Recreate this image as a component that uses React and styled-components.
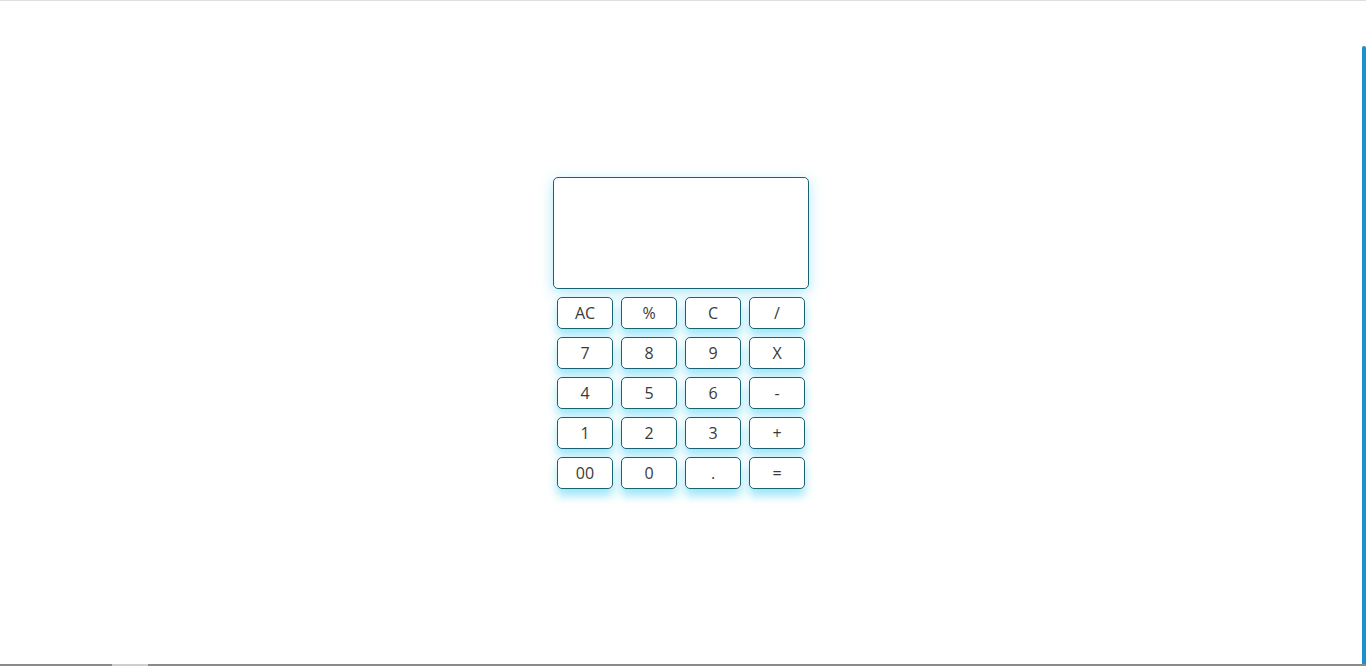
import React from "react";
import styled, { createGlobalStyle } from "styled-components";

const GlobalStyle = createGlobalStyle`
  html, body {
    margin: 0;
    padding: 0;
    background: #ffffff;
    font-family: "Open Sans", "Noto Sans", sans-serif;
  }
`;

const Page = styled.div`
  height: 666px;
  display: flex;
  flex-direction: column;
  box-sizing: border-box;
  border-top: 1px solid #dedede;
  overflow: hidden;
`;

const Body = styled.div`
  flex: 1;
  display: flex;
`;

const Main = styled.main`
  flex: 1;
  display: flex;
  justify-content: center;
  align-items: center;
`;

const SideRail = styled.div`
  width: 4px;
  display: flex;
  flex-direction: column;
  padding-top: 45px;
`;

const RailBar = styled.div`
  flex: 1;
  background: #1b8fcf;
  border-radius: 2px 2px 0 0;
`;

const BottomStrip = styled.div`
  height: 2px;
  display: flex;
  background: #8a8a8a;
`;

const StripGap = styled.div`
  width: ${p => p.w}px;
  background: ${p => p.light ? "#cfcfcf" : "transparent"};
`;

const Calculator = styled.div`
  width: 256px;
  display: flex;
  flex-direction: column;
  gap: 8px;
`;

const Display = styled.div`
  height: 112px;
  box-sizing: border-box;
  border: 1px solid #1a6176;
  border-radius: 5px;
  background: #fff;
  box-shadow: 0 4px 14px rgba(50, 200, 235, 0.4);
`;

const Keys = styled.div`
  display: grid;
  grid-template-columns: repeat(4, 56px);
  column-gap: 8px;
  row-gap: 8px;
  padding: 0 4px;
`;

const Key = styled.button`
  height: 32px;
  box-sizing: border-box;
  border: 1px solid #1a6176;
  border-radius: 5px;
  background: #fff;
  color: #3a3a3a;
  font-family: "Open Sans", "Noto Sans", sans-serif;
  font-size: 16px;
  font-weight: 400;
  padding: 0;
  cursor: pointer;
  box-shadow: 0 7px 10px rgba(40, 200, 235, 0.45);
`;

const keys = [
  "AC", "%", "C", "/",
  "7", "8", "9", "X",
  "4", "5", "6", "-",
  "1", "2", "3", "+",
  "00", "0", ".", "="
];

const App = () => {
  return (
    <Page>
      <GlobalStyle />
      <Body>
        <Main>
          <Calculator>
            <Display />
            <Keys>
              {keys.map(k => (
                <Key key={k}>{k}</Key>
              ))}
            </Keys>
          </Calculator>
        </Main>
        <SideRail>
          <RailBar />
        </SideRail>
      </Body>
      <BottomStrip>
        <StripGap w={112} />
        <StripGap w={36} light />
      </BottomStrip>
    </Page>
  );
};

export default App;
